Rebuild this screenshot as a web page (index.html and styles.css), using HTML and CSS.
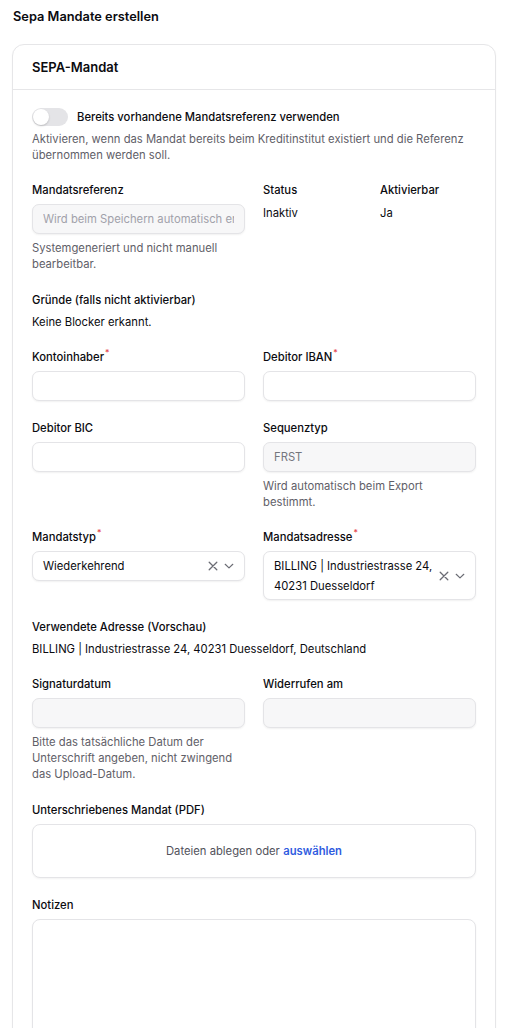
FILE: index.html
```html
<!DOCTYPE html>
<html lang="de">
<head>
<meta charset="utf-8">
<title>Sepa Mandate erstellen</title>
<link rel="stylesheet" href="styles.css">
</head>
<body>
<div class="page">
  <h1 class="page-title">Sepa Mandate erstellen</h1>
  <section class="card">
    <header class="card-header"><h2>SEPA-Mandat</h2></header>
    <div class="card-body">
      <div class="block">
        <div class="toggle-row">
          <span class="toggle"><span class="knob"></span></span>
          <span class="toggle-label">Bereits vorhandene Mandatsreferenz verwenden</span>
        </div>
        <p class="help help-toggle">Aktivieren, wenn das Mandat bereits beim Kreditinstitut existiert und die Referenz übernommen werden soll.</p>
      </div>

      <div class="grid-2">
        <div class="field">
          <div class="label">Mandatsreferenz</div>
          <input class="input is-disabled" type="text" placeholder="Wird beim Speichern automatisch erzeugt" disabled>
          <p class="help">Systemgeneriert und nicht manuell bearbeitbar.</p>
        </div>
        <div class="stats">
          <div class="field">
            <div class="label">Status</div>
            <div class="value value-stat">Inaktiv</div>
          </div>
          <div class="field">
            <div class="label">Aktivierbar</div>
            <div class="value value-stat">Ja</div>
          </div>
        </div>
      </div>

      <div class="field">
        <div class="label">Gründe (falls nicht aktivierbar)</div>
        <div class="value">Keine Blocker erkannt.</div>
      </div>

      <div class="grid-2">
        <div class="field">
          <div class="label">Kontoinhaber<sup class="req">*</sup></div>
          <input class="input" type="text">
        </div>
        <div class="field">
          <div class="label">Debitor IBAN<sup class="req">*</sup></div>
          <input class="input" type="text">
        </div>
      </div>

      <div class="grid-2">
        <div class="field">
          <div class="label">Debitor BIC</div>
          <input class="input" type="text">
        </div>
        <div class="field">
          <div class="label">Sequenztyp</div>
          <input class="input is-disabled" type="text" value="FRST" disabled>
          <p class="help">Wird automatisch beim Export bestimmt.</p>
        </div>
      </div>

      <div class="grid-2">
        <div class="field">
          <div class="label">Mandatstyp<sup class="req">*</sup></div>
          <div class="select">
            <span class="select-text">Wiederkehrend</span>
            <span class="select-icons">
              <svg class="ic-x" viewBox="0 0 10 10" width="10" height="10" aria-hidden="true"><path d="M1.2 1.2l7.6 7.6M8.8 1.2l-7.6 7.6" stroke="currentColor" stroke-width="1.3" stroke-linecap="round" fill="none"/></svg>
              <svg class="ic-chev" viewBox="0 0 10 6" width="10" height="6" aria-hidden="true"><path d="M1.2 1.3l3.8 3.6 3.8-3.6" stroke="currentColor" stroke-width="1.2" stroke-linecap="round" stroke-linejoin="round" fill="none"/></svg>
            </span>
          </div>
        </div>
        <div class="field">
          <div class="label">Mandatsadresse<sup class="req">*</sup></div>
          <div class="select">
            <span class="select-text">BILLING | Industriestrasse 24, 40231 Duesseldorf</span>
            <span class="select-icons">
              <svg class="ic-x" viewBox="0 0 10 10" width="10" height="10" aria-hidden="true"><path d="M1.2 1.2l7.6 7.6M8.8 1.2l-7.6 7.6" stroke="currentColor" stroke-width="1.3" stroke-linecap="round" fill="none"/></svg>
              <svg class="ic-chev" viewBox="0 0 10 6" width="10" height="6" aria-hidden="true"><path d="M1.2 1.3l3.8 3.6 3.8-3.6" stroke="currentColor" stroke-width="1.2" stroke-linecap="round" stroke-linejoin="round" fill="none"/></svg>
            </span>
          </div>
        </div>
      </div>

      <div class="field">
        <div class="label">Verwendete Adresse (Vorschau)</div>
        <div class="value">BILLING | Industriestrasse 24, 40231 Duesseldorf, Deutschland</div>
      </div>

      <div class="grid-2">
        <div class="field">
          <div class="label">Signaturdatum</div>
          <input class="input is-disabled" type="text" disabled>
          <p class="help">Bitte das tatsächliche Datum der Unterschrift angeben, nicht zwingend das Upload-Datum.</p>
        </div>
        <div class="field">
          <div class="label">Widerrufen am</div>
          <input class="input is-disabled" type="text" disabled>
        </div>
      </div>

      <div class="field">
        <div class="label">Unterschriebenes Mandat (PDF)</div>
        <div class="dropzone">Dateien ablegen oder <span class="link">auswählen</span></div>
      </div>

      <div class="field">
        <div class="label">Notizen</div>
        <textarea class="textarea"></textarea>
      </div>
    </div>
  </section>
</div>
</body>
</html>
```

FILE: styles.css
```css
* { box-sizing: border-box; }

html, body {
  margin: 0;
  background: #ffffff;
}

body {
  font-family: Inter, "Noto Sans", sans-serif;
  color: #0b0b0f;
  -webkit-font-smoothing: antialiased;
}

.page {
  padding: 7px 11px 0 12px;
}

.page-title {
  margin: 0 0 17px 1px;
  font-size: 12.8px;
  line-height: 20px;
  font-weight: 600;
}

.card {
  border: 1px solid #e6e6e8;
  border-radius: 12px;
  background: #fff;
  box-shadow: 0 1px 2px rgba(0, 0, 0, 0.04);
}

.card-header {
  padding: 12px 19px 12px;
  border-bottom: 1px solid #e6e6e8;
}

.card-header h2 {
  margin: 0;
  font-size: 13px;
  line-height: 20px;
  font-weight: 600;
}

.card-body {
  padding: 18px 19px 20px;
  display: flex;
  flex-direction: column;
  gap: 19.25px;
}

.toggle-row {
  display: flex;
  align-items: center;
  gap: 9px;
  height: 18px;
}

.toggle {
  width: 36px;
  height: 18px;
  border-radius: 9px;
  background: #e4e4e7;
  padding: 1px;
  flex: none;
  display: flex;
}

.knob {
  width: 16px;
  height: 16px;
  border-radius: 50%;
  background: #fff;
  box-shadow: 0 1px 2px rgba(0, 0, 0, 0.18);
}

.toggle-label {
  font-size: 11.25px;
  line-height: 16px;
  font-weight: 500;
}

.help {
  margin: 6px 0 0;
  font-size: 11.25px;
  line-height: 16px;
  color: #5f6068;
}

.help-toggle {
  margin-top: 5px;
}

.grid-2 {
  display: grid;
  grid-template-columns: 1fr 1fr;
  column-gap: 18px;
}

.stats {
  display: grid;
  grid-template-columns: 117px 1fr;
}

.field {
  display: flex;
  flex-direction: column;
  min-width: 0;
}

.label {
  font-size: 11.25px;
  line-height: 16px;
  font-weight: 500;
  margin-bottom: 6px;
  white-space: nowrap;
}

.req {
  color: #e5484d;
  font-size: 8.5px;
  line-height: 0;
  vertical-align: 0;
  position: relative;
  top: -5px;
  margin-left: 1px;
}

.value {
  font-size: 11.25px;
  line-height: 16px;
}

.value-stat {
  margin-top: 1px;
}

.input {
  display: block;
  width: 100%;
  height: 30px;
  margin: 0;
  padding: 0 10px;
  border: 1px solid #e4e4e7;
  border-radius: 7px;
  background: #fff;
  box-shadow: 0 1px 2px rgba(0, 0, 0, 0.06);
  font: inherit;
  font-size: 11.25px;
  color: #0b0b0f;
  outline: none;
}

.input.is-disabled {
  background: #f7f7f8;
  color: #75767d;
  -webkit-text-fill-color: #75767d;
  opacity: 1;
}

.input::placeholder {
  color: #a1a1aa;
  -webkit-text-fill-color: #a1a1aa;
}

.select {
  display: flex;
  align-items: center;
  min-height: 30px;
  padding: 3.3px 10px;
  border: 1px solid #e4e4e7;
  border-radius: 7px;
  background: #fff;
  box-shadow: 0 1px 2px rgba(0, 0, 0, 0.06);
}

.select-text {
  flex: 1;
  min-width: 0;
  font-size: 11.25px;
  line-height: 20px;
  padding-right: 5px;
}

.select-icons {
  display: flex;
  align-items: center;
  gap: 6px;
  color: #6b6c74;
  flex: none;
}

.ic-x { width: 10px; height: 10px; }
.ic-chev { width: 10px; height: 6px; }

.dropzone {
  height: 54.5px;
  border: 1px solid #e4e4e7;
  border-radius: 8px;
  background: #fff;
  box-shadow: 0 1px 2px rgba(0, 0, 0, 0.05);
  display: flex;
  align-items: center;
  justify-content: center;
  font-size: 11.25px;
  color: #52525b;
}

.link {
  color: #2f5ce0;
  font-weight: 600;
  margin-left: 0.3em;
}

.textarea {
  display: block;
  width: 100%;
  height: 124px;
  margin: 0;
  padding: 8px 10px;
  border: 1px solid #e4e4e7;
  border-radius: 8px;
  background: #fff;
  box-shadow: 0 1px 2px rgba(0, 0, 0, 0.05);
  font: inherit;
  font-size: 11.25px;
  resize: vertical;
  outline: none;
}
```
